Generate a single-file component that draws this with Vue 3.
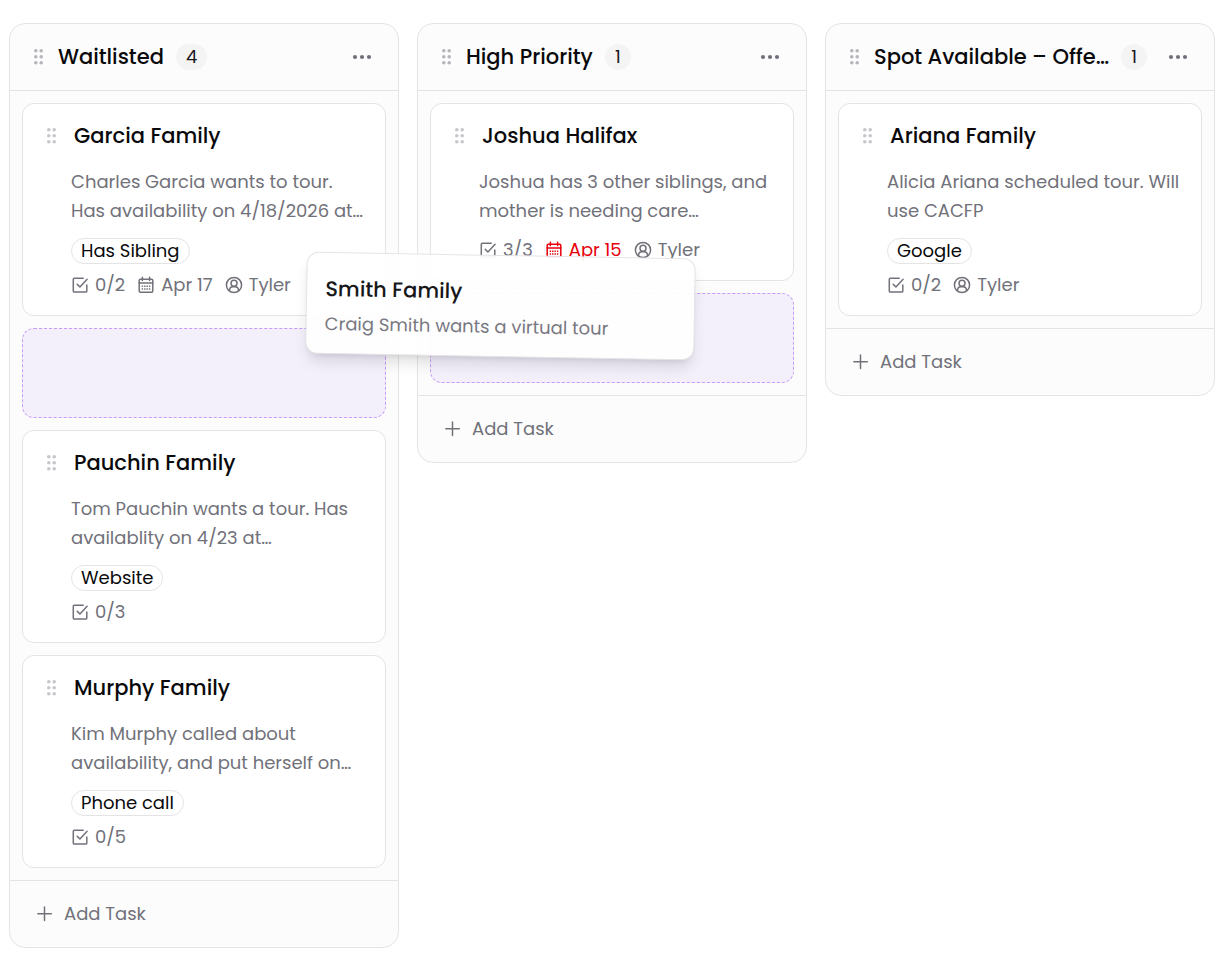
<script setup>
const columns = [
  {
    title: 'Waitlisted',
    count: 4,
    items: [
      {
        id: 'garcia',
        title: 'Garcia Family',
        lines: ['Charles Garcia wants to tour.', 'Has availability on 4/18/2026 at…'],
        tag: 'Has Sibling',
        checks: '0/2',
        date: 'Apr 17',
        owner: 'Tyler'
      },
      { id: 'slot-source', slot: true },
      {
        id: 'pauchin',
        title: 'Pauchin Family',
        lines: ['Tom Pauchin wants a tour. Has', 'availablity on 4/23 at…'],
        tag: 'Website',
        checks: '0/3'
      },
      {
        id: 'murphy',
        title: 'Murphy Family',
        lines: ['Kim Murphy called about', 'availability, and put herself on…'],
        tag: 'Phone call',
        checks: '0/5'
      }
    ]
  },
  {
    title: 'High Priority',
    count: 1,
    items: [
      {
        id: 'halifax',
        title: 'Joshua Halifax',
        lines: ['Joshua has 3 other siblings, and', 'mother is needing care…'],
        checks: '3/3',
        date: 'Apr 15',
        overdue: true,
        owner: 'Tyler'
      },
      { id: 'slot-target', slot: true }
    ]
  },
  {
    title: 'Spot Available – Offe…',
    count: 1,
    items: [
      {
        id: 'ariana',
        title: 'Ariana Family',
        lines: ['Alicia Ariana scheduled tour. Will', 'use CACFP'],
        tag: 'Google',
        checks: '0/2',
        owner: 'Tyler'
      }
    ]
  }
]

const gripDots = [2.8, 8.8, 14.8].flatMap((y) => [[5.8, y], [11.2, y]])
</script>

<template>
  <main class="board">
    <section v-for="col in columns" :key="col.title" class="column">
      <header class="column-head">
        <button class="grip" type="button" aria-label="Move column">
          <svg width="18" height="18" viewBox="0 0 18 18">
            <circle v-for="[x, y] in gripDots" :key="`${x}-${y}`" :cx="x" :cy="y" r="1.8" />
          </svg>
        </button>
        <h2 class="column-title">{{ col.title }}</h2>
        <span class="count">{{ col.count }}</span>
        <button class="more" type="button" aria-label="Column options">
          <svg width="24" height="24" viewBox="0 0 24 24">
            <circle cx="5" cy="12" r="2.1" />
            <circle cx="12" cy="12" r="2.1" />
            <circle cx="19" cy="12" r="2.1" />
          </svg>
        </button>
      </header>

      <div class="list">
        <template v-for="item in col.items" :key="item.id">
          <div v-if="item.slot" class="slot"></div>
          <article v-else class="card">
            <div class="card-head">
              <button class="grip light" type="button" aria-label="Move card">
                <svg width="18" height="18" viewBox="0 0 18 18">
                  <circle v-for="[x, y] in gripDots" :key="`${x}-${y}`" :cx="x" :cy="y" r="1.8" />
                </svg>
              </button>
              <h3 class="card-title">{{ item.title }}</h3>
            </div>
            <div class="card-body">
              <p class="desc">
                <span v-for="line in item.lines" :key="line" class="desc-line">{{ line }}</span>
              </p>
              <span v-if="item.tag" class="tag">{{ item.tag }}</span>
              <div class="meta">
                <span class="meta-item">
                  <svg class="icon" width="18" height="18" viewBox="0 0 18 18">
                    <path d="M12.2 2.3H3.4A1.1 1.1 0 0 0 2.3 3.4V14.9a1.1 1.1 0 0 0 1.1 1.1H14.7a1.1 1.1 0 0 0 1.1-1.1V9" />
                    <path d="M6.3 8.4l2.6 2.6 7.2-7.8" />
                  </svg>
                  {{ item.checks }}
                </span>
                <span v-if="item.date" class="meta-item" :class="{ overdue: item.overdue }">
                  <svg class="icon" width="18" height="18" viewBox="0 0 18 18">
                    <rect x="2.2" y="3.2" width="13.6" height="13" rx="1.2" />
                    <path d="M2.2 7h13.6M5.4 1.3v3.2M12.6 1.3v3.2" />
                    <path class="days" d="M4.7 10.2h1.4M7.1 10.2h1.4M9.5 10.2h1.4M11.9 10.2h1.4M4.7 13h1.4M7.1 13h1.4M9.5 13h1.4M11.9 13h1.4" />
                  </svg>
                  {{ item.date }}
                </span>
                <span v-if="item.owner" class="meta-item">
                  <svg class="icon" width="18" height="18" viewBox="0 0 18 18">
                    <circle cx="9" cy="9" r="7.6" />
                    <circle cx="9" cy="7.2" r="3" />
                    <path d="M4.5 14.6v-.4a3.6 3.6 0 0 1 3.6-3.5h1.8a3.6 3.6 0 0 1 3.6 3.5v.4" />
                  </svg>
                  {{ item.owner }}
                </span>
              </div>
            </div>
          </article>
        </template>
      </div>

      <footer class="column-foot">
        <button class="add" type="button">
          <svg class="icon" width="18" height="18" viewBox="0 0 18 18">
            <path d="M8.5 2v13.5M1.8 8.8h13.5" />
          </svg>
          Add Task
        </button>
      </footer>
    </section>

    <article class="dragged">
      <h3 class="card-title">Smith Family</h3>
      <p class="desc">Craig Smith wants a virtual tour</p>
    </article>
  </main>
</template>

<style>
body {
  margin: 0;
  background: #fff;
}
</style>

<style scoped>
.board {
  position: relative;
  display: grid;
  grid-template-columns: repeat(3, minmax(0, 1fr));
  gap: 18px;
  align-items: start;
  padding: 23px 12px 16px 9px;
  font-family: Poppins, Inter, "Open Sans", sans-serif;
  font-size: 18px;
  line-height: 29px;
  color: #71717a;
}

.column {
  border: 1px solid #e4e4e7;
  border-radius: 16px;
  background: #fcfcfc;
}

.column-head {
  display: flex;
  align-items: center;
  height: 66px;
  padding: 0 24px 0 20px;
  border-bottom: 1px solid #e4e4e7;
}

button {
  display: flex;
  align-items: center;
  padding: 0;
  border: 0;
  background: none;
  font: inherit;
  color: inherit;
  cursor: pointer;
}

.grip {
  flex: none;
  fill: #b5b5bb;
  cursor: grab;
}

.grip.light {
  fill: #c6c6cb;
}

.column-title,
.card-title {
  margin: 0;
  font-size: 21px;
  font-weight: 500;
  line-height: 32px;
  color: #09090b;
  white-space: nowrap;
}

.column-title {
  margin-left: 10px;
  overflow: hidden;
  text-overflow: ellipsis;
}

.count {
  flex: none;
  box-sizing: border-box;
  min-width: 26px;
  height: 26px;
  margin-left: 12px;
  padding: 0 10px;
  border-radius: 13px;
  background: #f4f4f5;
  line-height: 26px;
  text-align: center;
  color: #18181b;
}

.more {
  flex: none;
  margin-left: auto;
  fill: #71717a;
}

.list {
  display: flex;
  flex-direction: column;
  gap: 12px;
  padding: 12px;
}

.card {
  padding: 16px 16px 17px 20px;
  border: 1px solid #e4e4e7;
  border-radius: 12px;
  background: #fff;
}

.card-head {
  display: flex;
  align-items: center;
  gap: 13px;
}

.card-body {
  padding-left: 28px;
}

.desc {
  margin: 15px 0 11px;
  white-space: nowrap;
}

.desc-line {
  display: block;
}

.tag {
  display: block;
  width: fit-content;
  margin: 13px 0 7px;
  padding: 0 9px;
  border: 1px solid #e4e4e7;
  border-radius: 13px;
  line-height: 24px;
  color: #09090b;
}

.meta {
  display: flex;
  gap: 12px;
  line-height: 27px;
}

.meta-item {
  display: flex;
  align-items: center;
  gap: 6px;
}

.overdue {
  color: #e7000b;
}

.icon {
  flex: none;
  fill: none;
  stroke: currentColor;
  stroke-width: 1.5;
  stroke-linecap: round;
  stroke-linejoin: round;
}

.days {
  stroke-linecap: butt;
}

.slot {
  box-sizing: border-box;
  height: 90px;
  border: 1px dashed #c89bfa;
  border-radius: 12px;
  background: #f3effb;
}

.column-foot {
  display: flex;
  height: 65px;
  padding: 0 26px 1px;
  border-top: 1px solid #e4e4e7;
}

.add {
  gap: 10px;
}

.dragged {
  position: absolute;
  top: 255px;
  left: 306px;
  box-sizing: border-box;
  width: 389px;
  padding: 20px 18px 15px;
  border: 1px solid #e4e4e7;
  border-radius: 12px;
  background: #fff;
  box-shadow: 0 10px 15px -3px rgba(0, 0, 0, 0.12), 0 4px 6px -4px rgba(0, 0, 0, 0.12);
  opacity: 0.94;
  transform: rotate(1deg);
}

.dragged .desc {
  margin: 4px 0 0;
}
</style>
